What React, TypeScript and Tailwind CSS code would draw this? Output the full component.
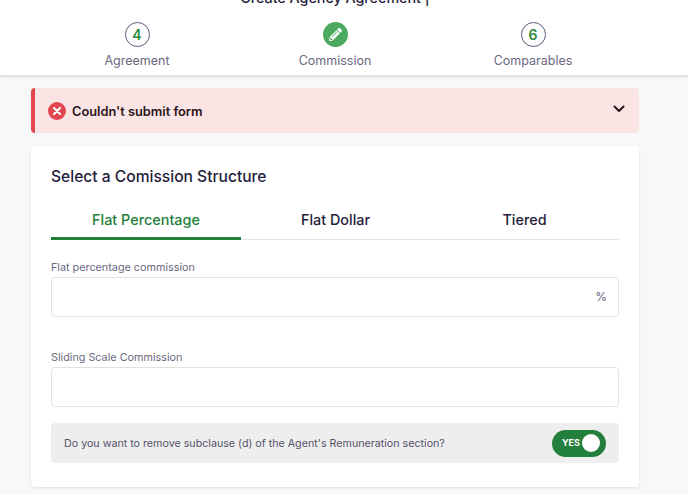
import { FaPencilAlt } from 'react-icons/fa';

const font = { fontFamily: 'Inter' };

function Step({ label, value, active }: { label: string; value?: string; active?: boolean }) {
  return (
    <div className="flex w-[198px] flex-col items-center">
      {active ? (
        <span className="flex h-[25px] w-[25px] items-center justify-center rounded-full bg-[#4caa60]">
          <FaPencilAlt className="h-[13px] w-[13px] text-white" />
        </span>
      ) : (
        <span className="flex h-[25px] w-[25px] items-center justify-center rounded-full border border-[#5f5b78] text-[14px] font-semibold text-[#2b8a3e]">
          {value}
        </span>
      )}
      <span className="mt-[4px] text-[12.5px] leading-[20px] text-[#6b6880]">{label}</span>
    </div>
  );
}

export default function App() {
  return (
    <div className="h-[494px] w-[688px] overflow-hidden bg-[#f8f8f8] font-['Inter',sans-serif]" style={font}>
      <div className="h-[76px] overflow-hidden border-b border-[#e4e4e4] bg-white pr-[18px] shadow-sm">
        <p className="mt-[-10px] h-[32px] text-center text-[14.3px] font-medium leading-[16px] text-[#1f1c3a]">
          Create Agency Agreement |
        </p>
        <div className="flex justify-center">
          <Step label="Agreement" value="4" />
          <Step label="Commission" active />
          <Step label="Comparables" value="6" />
        </div>
      </div>

      <div className="w-[670px] px-[31px] pt-[12px]">
        <div className="flex h-[45px] items-center rounded-[4px] border-l-[4px] border-[#e2474f] bg-[#fbe4e4] pl-[13px] pr-[14px]">
          <span className="flex h-[18px] w-[18px] items-center justify-center rounded-full bg-[#e2474f]">
            <svg viewBox="0 0 10 10" className="h-[10px] w-[10px]" stroke="white" strokeWidth="2.2" strokeLinecap="round">
              <path d="M2 2l6 6M8 2l-6 6" />
            </svg>
          </span>
          <span className="ml-[6px] pt-[2px] text-[12.8px] font-semibold text-[#2a1520]">Couldn't submit form</span>
          <svg viewBox="0 0 12 8" className="ml-auto mb-[3px] h-[8px] w-[12px]" fill="none" stroke="#2a1520" strokeWidth="2" strokeLinecap="round" strokeLinejoin="round">
            <path d="M1.5 1.5L6 6l4.5-4.5" />
          </svg>
        </div>

        <div className="mt-[13px] h-[341px] rounded-[4px] bg-white px-[20px] pt-[21px] shadow-[0_1px_3px_rgba(0,0,0,0.1)]">
          <h2 className="text-[15.6px] font-medium leading-[20px] text-[#1f1c3a]">Select a Comission Structure</h2>

          <div className="mt-[12px] flex h-[41px] border-b border-[#e4e4e4] text-[14.4px] font-medium">
            <div className="-mb-px flex w-[190px] items-center justify-center border-b-[3px] border-[#23803c] pt-[3px] text-[#23803c]">Flat Percentage</div>
            <div className="flex w-[189px] items-center justify-center pt-[1px] text-[#1f1c3a]">Flat Dollar</div>
            <div className="flex w-[189px] items-center justify-center pt-[1px] text-[#1f1c3a]">Tiered</div>
          </div>

          <label className="mt-[20px] block text-[10.8px] leading-[16px] text-[#6b6880]">Flat percentage commission</label>
          <div className="mt-[1px] flex h-[40px] items-center justify-end rounded-[4px] border border-[#e2e2e2] pr-[11px] text-[12px] text-[#5f5b78]">%</div>

          <label className="mt-[33px] block text-[10.8px] leading-[16px] text-[#6b6880]">Sliding Scale Commission</label>
          <div className="mt-[1px] h-[40px] rounded-[4px] border border-[#e2e2e2]" />

          <div className="mt-[16px] flex h-[40px] items-center justify-between rounded-[4px] bg-[#eeeeee] pl-[13px] pr-[13px]">
            <span className="pt-[2px] text-[10.7px] text-[#55526a]">Do you want to remove subclause (d) of the Agent's Remuneration section?</span>
            <span className="flex h-[27px] w-[54px] items-center justify-between rounded-full bg-[#23803c] pl-[10px] pr-[6px]">
              <span className="text-[9px] font-bold text-white">YES</span>
              <span className="h-[18px] w-[18px] rounded-full bg-white" />
            </span>
          </div>
        </div>
      </div>
    </div>
  );
}
